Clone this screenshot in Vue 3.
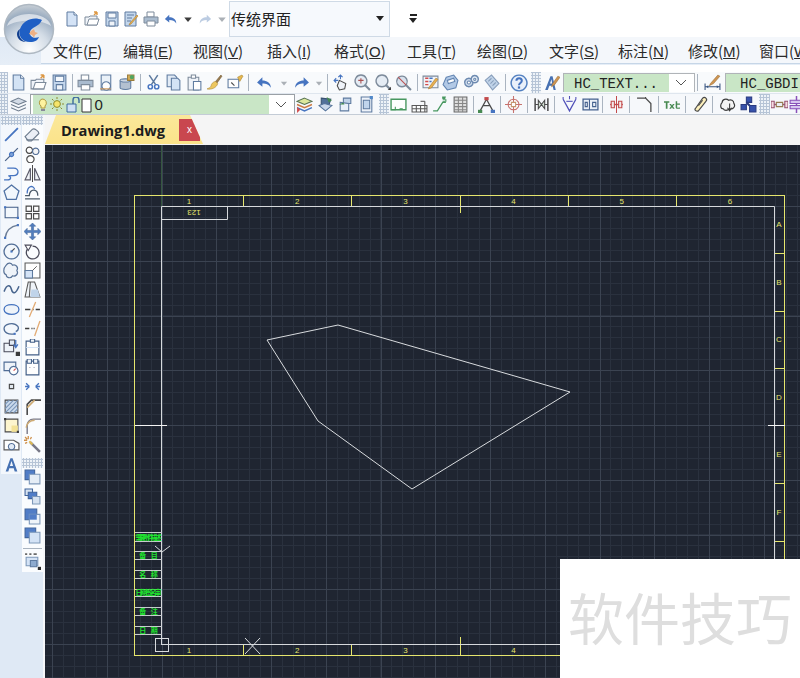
<template>
  <div class="cad-app">
    <!-- application orb sits over title + menu bars -->
    <svg class="orb" viewBox="0 0 52 52" width="52" height="52">
      <defs>
        <radialGradient id="orbFill" cx="50%" cy="92%" r="90%">
          <stop offset="0" stop-color="#ffffff" />
          <stop offset="0.45" stop-color="#d3dce6" />
          <stop offset="0.8" stop-color="#9aacc0" />
          <stop offset="1" stop-color="#c4ccd4" />
        </radialGradient>
      </defs>
      <circle cx="26" cy="26" r="24.5" fill="url(#orbFill)" stroke="#aeb8c2" stroke-width="1.5" />
      <path d="M4 23C8 7 44 7 48 23 38 16 14 16 4 23z" fill="#eef1f5" opacity=".7" />
      <path d="M39 17C31 13 20 17 17 26c-2 7 2 13 10 13 5 0 8-2 9-5-4 2-10 0-9-5 1-5 9-5 12-12z" fill="#1f5fc4" />
      <path d="M17 26c-2 6 0 11 6 13-6 0-9-4-9-8 0-2 1-4 3-5z" fill="#123f8e" />
      <path d="M28 28l3-2 1 3 3 1-3 2-1 3-2-3-3-1z" fill="#eeb084" />
    </svg>

    <!-- title bar -->
    <div class="title-bar">
      <span v-for="(ic, i) in quickIcons" :key="i" class="btn" :style="{ width: ic.w + 'px' }">
        <svg viewBox="0 0 16 16" :width="ic.s" :height="ic.s">
          <path v-for="(s, j) in icons[ic.n]" :key="j" :d="s[0]" :fill="s[1] || 'none'" :stroke="s[2] || 'none'" :stroke-width="s[3] || 1" />
        </svg>
      </span>
      <div class="ws-combo">
        <span>传统界面</span>
        <i class="caret"></i>
      </div>
      <span class="more"><b></b><i class="caret"></i></span>
    </div>

    <!-- menu bar -->
    <div class="menu-bar">
      <nav class="menu-items">
        <span v-for="m in menus" :key="m.k" class="menu-item" :style="{ width: m.w + 'px' }">{{ m.t }}(<u>{{ m.k }}</u>)</span>
      </nav>
    </div>

    <!-- toolbars -->
    <div class="toolbar tb1">
      <template v-for="(it, i) in toolbar1" :key="i">
        <span v-if="it.n === 'handle'" class="handle" :style="{ width: (it.w || 8) + 'px', marginLeft: (it.ml || 0) + 'px' }"></span>
        <span v-else-if="it.n === 'sep'" class="sep"></span>
        <div v-else-if="it.combo" class="combo" :style="{ width: it.w + 'px' }">
          <span class="combo-text">{{ it.combo }}</span>
          <span v-if="it.chev" class="chev"><svg viewBox="0 0 12 8" width="12" height="8"><path d="M1 1l5 5 5-5" fill="none" stroke="#555" /></svg></span>
        </div>
        <span v-else class="btn" :style="{ width: (it.w || 20.5) + 'px' }">
          <svg viewBox="0 0 16 16" :width="it.s || 17" :height="it.s || 17">
            <path v-for="(s, j) in icons[it.n]" :key="j" :d="s[0]" :fill="s[1] || 'none'" :stroke="s[2] || 'none'" :stroke-width="s[3] || 1" />
          </svg>
        </span>
      </template>
    </div>

    <div class="toolbar tb2">
      <template v-for="(it, i) in toolbar2" :key="i">
        <span v-if="it.n === 'handle'" class="handle" :style="{ width: (it.w || 8) + 'px', marginLeft: (it.ml || 0) + 'px' }"></span>
        <span v-else-if="it.n === 'sep'" class="sep"></span>
        <div v-else-if="it.n === 'layer'" class="layer-combo">
          <div class="layer-fill">
            <svg viewBox="0 0 56 16" width="56" height="16">
              <path d="M5 2a4 4 0 0 1 3 7v2H4V9a4 4 0 0 1 1-7z" fill="#fdf3a0" stroke="#b09a40" />
              <path d="M4 12h4v2H4z" fill="#889" />
              <circle cx="20" cy="7" r="3.4" fill="#f6e46a" stroke="#8d8a30" />
              <path d="M20 0v2M20 12v2M13 7h2M25 7h2M15 2l1.5 1.5M25 2l-1.5 1.5M15 12l1.5-1.5M25 12l-1.5-1.5" stroke="#8d8a30" />
              <path d="M30 7h9v8h-9z" fill="#cfe0f5" stroke="#3d6a9e" />
              <path d="M36 7V3a3 3 0 0 1 6 0v3" fill="none" stroke="#3d6a9e" stroke-width="1.4" />
              <path d="M45 2h9v13h-9z" fill="#fff" stroke="#333" />
            </svg>
            <span>0</span>
          </div>
          <span class="chev"><svg viewBox="0 0 12 8" width="12" height="8"><path d="M1 1l5 5 5-5" fill="none" stroke="#555" /></svg></span>
        </div>
        <span v-else class="btn" :style="{ width: (it.w || 20.5) + 'px' }">
          <svg viewBox="0 0 16 16" width="17" height="17">
            <path v-for="(s, j) in icons[it.n]" :key="j" :d="s[0]" :fill="s[1] || 'none'" :stroke="s[2] || 'none'" :stroke-width="s[3] || 1" />
          </svg>
        </span>
      </template>
    </div>

    <!-- main area: side toolbars + drawing -->
    <div class="main">
      <aside class="side">
        <div class="side-col col-a">
          <span class="side-handle"></span>
          <span v-for="n in sideA" :key="n" class="side-btn">
            <svg viewBox="0 0 16 16" width="17" height="17">
              <path v-for="(s, j) in icons[n]" :key="j" :d="s[0]" :fill="s[1] || 'none'" :stroke="s[2] || 'none'" :stroke-width="s[3] || 1" />
            </svg>
          </span>
        </div>
        <div class="side-col col-b">
          <span class="side-handle"></span>
          <span v-for="n in sideB" :key="n" class="side-btn">
            <svg viewBox="0 0 16 16" width="17" height="17">
              <path v-for="(s, j) in icons[n]" :key="j" :d="s[0]" :fill="s[1] || 'none'" :stroke="s[2] || 'none'" :stroke-width="s[3] || 1" />
            </svg>
          </span>
          <span class="side-handle mid"></span>
          <span v-for="n in sideB2" :key="n" class="side-btn">
            <svg viewBox="0 0 16 16" width="17" height="17">
              <path v-for="(s, j) in icons[n]" :key="j" :d="s[0]" :fill="s[1] || 'none'" :stroke="s[2] || 'none'" :stroke-width="s[3] || 1" />
            </svg>
          </span>
          <span class="side-sep"></span>
          <span class="side-btn">
            <svg viewBox="0 0 16 16" width="17" height="17">
              <path v-for="(s, j) in icons.spell" :key="j" :d="s[0]" :fill="s[1] || 'none'" :stroke="s[2] || 'none'" :stroke-width="s[3] || 1" />
            </svg>
          </span>
        </div>
      </aside>

      <section class="doc">
        <div class="tab-strip">
          <div class="tab">
            <span class="tab-name">Drawing1.dwg</span>
            <span class="tab-close">x</span>
          </div>
        </div>

        <div class="canvas-wrap">
          <svg class="canvas" viewBox="45 145 755 533" width="755" height="533">
            <rect x="45" y="145" width="755" height="533" fill="#1f2531" />
            <!-- grid -->
            <path :d="minorGrid" stroke="#2a313e" fill="none" />
            <path :d="majorGrid" stroke="#3b4351" fill="none" />
            <path d="M161.5 145V206" stroke="#35573f" />

            <!-- yellow sheet border -->
            <g stroke="#e6e66e" fill="none">
              <rect x="134.5" y="195.5" width="650" height="460" />
              <path d="M243.5 195V206M351.5 195V206M460.5 195V213M568.5 195V206M676.5 195V206" />
              <path d="M243.5 644V655M351.5 644V655M460.5 637V655" />
              <path d="M774 253.5H785M774 311.5H785M774 368.5H785M774 483.5H785M774 541.5H785" />
            </g>
            <g class="sheet-label">
              <text v-for="l in topLabels" :key="l.t" :x="l.x" y="204">{{ l.t }}</text>
              <text v-for="l in bottomLabels" :key="'b' + l.t" :x="l.x" y="653">{{ l.t }}</text>
              <text v-for="l in sideLabels" :key="l.t" x="779" :y="l.y">{{ l.t }}</text>
            </g>

            <!-- white inner border -->
            <g stroke="#d6d9dc" fill="none">
              <path d="M161.5 645V206.5H774.5V600" />
              <path d="M161.5 644.5H600" />
              <path d="M162 219.5H227.5V206" />
              <path d="M135 425.5H167M768 425.5H785" stroke="#f4f4f4" />
            </g>
            <text class="sheet-label" transform="rotate(180 194 213)" x="194" y="216">123</text>

            <!-- title block rows -->
            <g stroke="#c8cbcf" fill="none">
              <path v-for="r in titleRows" :key="r.y1" :d="`M135 ${r.y1}.5H162M135 ${r.y2}.5H162`" />
            </g>
            <g class="row-label">
              <text v-for="r in titleRows" :key="r.t" x="148.5" :y="r.y2 - 1.5" :textLength="r.len || null">{{ r.t }}</text>
            </g>

            <!-- drawn shape -->
            <polygon points="267,340 338,325 570,392 412,489 318,421" fill="none" stroke="#d8dbde" />

            <!-- ucs and cursor -->
            <g stroke="#d8dbde" fill="none">
              <rect x="155.5" y="638.5" width="13" height="13" />
              <path d="M155 546l7 6 8-6" />
              <path d="M245 638l15 16M260 638l-15 16" />
            </g>
          </svg>
          <!-- watermark over the drawing -->
          <div class="watermark">软件技巧</div>
        </div>
      </section>
    </div>
  </div>
</template>

<script setup>
const B = '#2e62b8'
const O = '#4a6a94'
const L = '#cfe0f5'
const G = '#6d7c8e'

// each icon: list of [path, fill, stroke, width]
const icons = {
  new: [['M3 1h7l3 3v11H3z', L, O], ['M10 1v3h3', '#fff', O]],
  open: [['M1 6h4l1-1h7v9H1z', '#eef3f9', G], ['M3 14l2-6h10l-2 6z', '#fff', G], ['M10 4l3-3M13 1v3M13 1h-3', null, '#d98a2a', 1.4]],
  save: [['M2 1h12v14H2z', '#bcd2ea', O], ['M4 2h8v5H4z', '#f4f8fc', O], ['M5 10h6v5H5z', '#eef3f9', O]],
  savepen: [['M2 1h11v14H2z', '#bcd2ea', O], ['M4 4h7M4 7h5M4 10h4', null, O], ['M7 12l7-8 1 1-7 8-2 1z', '#e6a83a', '#a06a18', 0.6]],
  print: [['M4 1h7v5H4z', '#fff', G], ['M1 6h14v6H1z', '#9fb3c9', G], ['M4 10h8v5H4z', '#fff', G]],
  preview: [['M3 1h9v14H3z', '#e9f0f8', O], ['M11 9a4 4 0 1 1-1-1z', '#fff', O], ['M2 14h10', null, '#c9873b']],
  publish: [['M2 6c0-2 10-2 10 0v7c0 2-10 2-10 0z', '#aab9ca', O], ['M2 6c0 2 10 2 10 0', '#e8eef5', O], ['M9 1h6v5H9z', '#d9a441', '#8d6a20'], ['M13 5a2 2 0 1 1 .1 0', '#3a9a4a']],
  cut: [['M4 1l6 9M12 1l-6 9', null, O, 1.4], ['M3 12a2 2 0 1 0 4 0 2 2 0 1 0-4 0zM9 12a2 2 0 1 0 4 0 2 2 0 1 0-4 0z', '#fff', B, 1.4]],
  copy: [['M2 1h7l2 2v9H2z', '#dfe9f5', O], ['M6 4h6l2 2v9H6z', L, O]],
  paste: [['M2 3h10v12H2z', '#eef3f9', G], ['M5 1h4v3H5z', '#fff', G], ['M7 7h7v8H7z', '#fff', O]],
  brush: [['M9 7l5-6 1 1-5 7z', '#8a6a3a', '#6a4a1a', 0.6], ['M9 7l2 2c-1 4-6 6-10 5 3-1 4-2 4-4 1-2 3-3 4-3z', '#ecc14a', '#a8801e', 0.6]],
  match: [['M1 5h10v8H1z', '#fff', O], ['M4 8l3 3', null, '#333'], ['M10 3l4-2 1 1-3 5z', '#e6b13a', '#a07818', 0.6]],
  undo: [['M1 8l5-5v3c4 0 8 2 8 7-2-3-4-4-8-4v3z', B]],
  undoL: [['M1 8l5-5v3c4 0 8 2 8 7-2-3-4-4-8-4v3z', '#9db8da']],
  redo: [['M15 8l-5-5v3c-4 0-8 2-8 7 2-3 4-4 8-4v3z', B]],
  redoL: [['M15 8l-5-5v3c-4 0-8 2-8 7 2-3 4-4 8-4v3z', '#b3c6df']],
  dd: [['M3 6h10l-5 6z', '#222']],
  ddL: [['M3 6h10l-5 6z', '#a0a6ad']],
  pan: [['M6 6l6 3-1 5-5 1-2-4z', '#eef3f9', '#333'], ['M1 6h4M3 4l-2 2 2 2M7 1v4M5 3l2-2 2 2', null, B]],
  zoomR: [['M6.5 1a5.5 5.5 0 1 0 .1 0z', '#e3ebf4', G, 1.3], ['M4 6h5M6.5 4v5', null, '#a03a3a'], ['M10.5 10.5L15 15', null, G, 2]],
  zoomW: [['M6.5 1a5.5 5.5 0 1 0 .1 0z', '#e3ebf4', G, 1.3], ['M10.5 10.5L14 14', null, G, 2], ['M12 15h3v-3z', '#222']],
  zoomP: [['M6.5 2a5 5 0 1 0 .1 0z', '#d4dfec', G, 1.3], ['M3 3l8 8', null, '#b23a3a'], ['M10.5 10.5L15 15', null, G, 2]],
  props: [['M1 2h14v11H1z', '#f0f4f9', G], ['M3 4h3M3 7h3M3 10h3', null, '#c33', 1.4], ['M7 4h3M7 7h2', null, B, 1.4], ['M7 12l6-8 2 1-6 8-3 1z', '#e6a83a', '#a06a18', 0.6]],
  sheet: [['M4 3l7-2 4 5-2 7-8 2-4-5z', '#a9c3e3', '#4e75a8'], ['M5 6l6-2 1 3-6 2z', '#fff', '#4e75a8']],
  gear2: [['M5.5 4a4 4 0 1 0 .1 0z', '#c8d8ec', '#5a7ba6', 1.4], ['M11 1.5a3.4 3.4 0 1 0 .1 0z', '#e3ecf6', '#5a7ba6', 1.4], ['M5.5 6.5a1.5 1.5 0 1 0 .1 0zM11 4a1 1 0 1 0 .1 0z', '#fff', '#5a7ba6']],
  calc: [['M2 6l6-5 7 8-6 6z', '#b9cee6', '#7a93b3'], ['M5 7l3-3M7 9l3-3M9 11l3-3', null, '#7a93b3']],
  help: [['M8 1a7 7 0 1 0 .1 0z', '#e7effa', '#3b6fb8', 1.3], ['M5.7 6c0-3 4.8-3 4.8 0 0 2-2.5 2-2.5 4', null, B, 1.8], ['M7 11h2v2H7z', B]],
  textstyle: [['M2 15L7 2h2l3 13h-2l-1-4H6l-1.5 4zM6.6 9h2L8 5z', '#2f5fa8'], ['M9 9l5-7 2 1-5 7-3 2z', '#c9873b', '#8a5a1a', 0.5]],
  dimstyle: [['M1 12h14M1 9v6M15 9v6', null, '#1f3f70'], ['M2 12l2-1.5v3zM14 12l-2-1.5v3z', '#1f3f70'], ['M6 9l7-8 2 1-6 7-4 2z', '#c9873b', '#8a5a1a', 0.5]],
  layers: [['M8 2l7 3-7 3-7-3z', '#cfd8e4', '#5d6d80'], ['M1 8l7 3 7-3M1 11l7 3 7-3', null, '#5d6d80']],
  l1: [['M8 2l7 3-7 3-7-3z', '#d9e58f', '#3f5e3a'], ['M1 8l7 3 7-3', null, '#c66a2a', 1.3], ['M1 11l7 3 7-3', null, '#2e62b8', 1.3], ['M1 10l3 3-3 3z', '#c33']],
  l2: [['M4 2l9 1-2 6-7-1z', '#3c5f8c', '#213c60'], ['M2 9l5-2 7 2-6 5z', '#c3d3e8', '#3c5f8c'], ['M9 1l5 3-3 2z', '#2e7a3a']],
  l3: [['M6 2h7v5H6z', '#b9cde6', O], ['M3 6l8 1v7H3z', '#e8f0f9', O], ['M2 8l4-2 1 2z', '#2a7a3a']],
  l4: [['M3 1h10v14H3z', '#eef3fa', O], ['M5 4h6v8H5z', '#b9d0ea', O], ['M11 0h3v3h-3z', '#3a79c3']],
  blockG: [['M1 3h14v10H1z', '#fff', '#2f8a4a', 1.3], ['M1 13h4v-3', null, '#2f8a4a'], ['M9 12h3', null, '#2f8a4a']],
  chartD: [['M1 9h14v6H1z', '#fff', '#444'], ['M1 12h14M5 9v6M9 9v6M13 5v10', null, '#444'], ['M9 5h4', null, '#444']],
  leader: [['M2 14h4l5-8h3', null, '#2f8a4a', 1.2], ['M14 1h-3v1h2v1h-2M14 3v2h-3', null, '#2f8a4a']],
  table: [['M2 1h12v14H2z', '#dcdcdc', '#555'], ['M2 4h12M2 7h12M2 10h12M2 13h12M6 1v14M10 1v14', null, '#777']],
  tree: [['M8 3l6 11M8 3L2 14M5 9h6', null, '#333', 1.2], ['M6 1h4v3H6z', '#b33'], ['M0 13h4v3H0z', '#2e7a3a'], ['M12 13h4v3h-4z', '#2e62b8']],
  target: [['M8 3a5 5 0 1 0 .1 0z', '#fff', '#c0605a'], ['M8 0v6M8 10v6M0 8h6M10 8h6', null, '#c0605a'], ['M6 6h4v4H6z', 'none', '#c08a5a']],
  dimW: [['M2 2v12M14 2v12', null, '#333', 1.4], ['M2 8h12', null, '#333'], ['M5 4l3 4-3 4zM11 4L8 8l3 4z', '#cfe0d0', '#333']],
  funnel: [['M2 3l6 11 6-11', null, '#3a3ab0', 1.2], ['M5 5h6', null, '#3a3ab0'], ['M2 1v2M8 0v3M14 1v2', null, '#3a3ab0']],
  frame01: [['M1 3h14v10H1z', '#eaf0f8', '#2d4c80', 1.2], ['M7 3v10', null, '#2d4c80'], ['M3 6h2v4H3zM10 6h3v4h-3z', 'none', '#2d4c80']],
  centerR: [['M2 8h12', null, '#b33', 1.3], ['M8 0v16', null, '#b33'], ['M3 5h3v6H3zM10 5h3v6h-3z', '#f4e8e8', '#b33']],
  corner: [['M1 2h8l5 5v8', null, '#333', 1.2], ['M9 2v-1', null, '#333']],
  txtG: [['M0 5h5v1.300H3.300V12H1.700V6.300H0zM5 7.500h1.600l.9 1.400.9-1.400H10L8.400 9.700 10 12H8.400l-.9-1.400-.9 1.400H5l1.600-2.300zM11 5h1.400v2H15v1.200h-2.600V10.500c0 .6.800.5 2.600.4V12c-3 .3-4 0-4-1.500z', '#2f7a3a']],
  clip: [['M4 12L11 2c2-2 5 1 3 3L7 14c-2 1-4-1-3-2z', '#fff0b5', '#333', 1.1], ['M7 9l4-5', null, '#333']],
  cloudDown: [['M3 6c0-3 4-4 6-2 2-1 5 0 5 3 2 3-1 6-4 5-2 2-5 2-6 0-3 0-3-4-1-6z', '#f4f4f4', '#222', 1.1], ['M10 7v6M8 11l2 3 2-3', null, '#222']],
  blue: [['M6 1h5v5H6zM1 8h5v5H1zM9 9h6v6H9z', '#1c3aa0', '#0e2270'], ['M6 6l3 3', null, '#0e2270', 2]],
  dimBar: [['M0 5h3v6H0zM13 5h3v6h-3z', '#f6d9e0', '#8a3a5a'], ['M3 8h10', null, '#8a3a5a', 1.4], ['M5 6h6v4H5z', '#e9eef5', '#8a6a3a']],
  purple: [['M8 0v16', null, '#7a3ab0', 1.4], ['M2 4h12v3H2zM2 9h12v3H2z', '#d3c0ee', '#7a3ab0']],
  // left column A
  line: [['M2 14L14 2', null, B, 1.7]],
  xline: [['M2 14L14 2', null, '#34507a', 1.2], ['M8 6a2 2 0 1 0 .1 0z', '#6f97d2', B]],
  pline: [['M1 14h3c4 0 4-3 1-4', null, B, 1.2], ['M4 3h6c6 0 5 7 0 7H6', null, B, 1.2]],
  polygon: [['M8 1l7 5.5-2.6 8H3.6L1 6.5z', '#f2f7fc', '#3a6098', 1.2]],
  rect: [['M2 3h12v10H2z', '#f2f7fc', '#2a4a78', 1], ['M1 2h2v2H1zM13 12h2v2h-2z', B]],
  arc: [['M2 14C3 7 8 3 14 2', null, '#5a6d88', 1.4], ['M1 13h2v2H1zM13 1h2v2h-2z', B]],
  circle: [['M8 1a7 7 0 1 0 .1 0z', '#f2f7fc', '#3a5a88', 1.2], ['M8 8l3-3', null, '#333'], ['M7 7h2v2H7z', B]],
  cloud: [['M3 3c2-3 5-2 6 0 3-1 6 2 4 5 2 3-1 6-4 5-2 3-6 2-6-1-3-1-3-6 0-9z', '#eef3f9', '#43608a', 1.1]],
  spline: [['M1 10c3-8 6-6 7-2s4 5 7-3', null, '#30507e', 1.4]],
  ellipse: [['M1 8c0-6 14-6 14 0s-14 6-14 0z', '#eef3f9', B, 1.2]],
  earc: [['M11 13c-6 1-10-1-10-5s9-7 13-2c1 2 0 4-2 5', null, '#3a5a88', 1.2], ['M10 12h2v2h-2z', B]],
  insert: [['M1 4h9v8H1z', '#eef3f9', '#334', 1], ['M6 1h5v5H6z', '#dfe9f5', '#334'], ['M12 1v7M10 5l2 3 2-3', null, B, 1.2], ['M12 12h4v4h-4z', '#222']],
  block: [['M1 3h11v8H1z', '#eef3f9', '#3a5a88', 1.1], ['M10 7a4 4 0 1 0 .1 0z', '#fff', '#3a5a88', 1.1], ['M10 11l2-2', null, '#c33']],
  point: [['M6 6h4v4H6z', '#dfe6ee', '#333', 1.1]],
  hatch: [['M2 2h12v12H2z', '#c5d6ea', '#333', 1], ['M2 6l4-4M2 10l8-8M2 14L14 2M6 14l8-8M10 14l4-4', null, '#6a88b0']],
  grad: [['M2 2h12v12H2z', '#fff5c8', '#333', 1], ['M8 8h6v6H8z', '#f4e08a'], ['M1 1h2v2H1zM13 13h2v2h-2z', '#222']],
  region: [['M1 4h9l5 3v6H1z', '#fff', '#444', 1.1], ['M8 7a3 3 0 1 0 .1 0z', '#dfe9f5', '#3a5a88']],
  textA: [['M2.500 14.500L7 2h2l4.500 12.500h-2.500l-.9-3H5.900l-.9 3zM6.500 9.500h3L8 4.800z', '#2f5fa8']],
  // left column B
  erase: [['M1 10l7-7c2-1 6 2 6 4l-7 7H4z', '#e9eef5', '#5a6a7e', 1.1], ['M2 13h12', null, '#5a6a7e']],
  copy2: [['M5 1a3 3 0 1 0 .1 0z', '#fff', '#333', 1.1], ['M11 2a3 3 0 1 0 .1 0z', '#f4f4f4', '#3a5a88', 1.1], ['M6 9a3.400 3.400 0 1 0 .1 0z', '#fff', '#333', 1.1]],
  mirror: [['M8 0v16', null, '#333'], ['M6 3v11H1zM10 3v11h5z', '#f0f4f9', '#445', 1.1]],
  offset: [['M1 14h14M1 11h4c0-7 8-7 8 0', null, '#345', 1.2], ['M3 9c0-8 6-8 7-4', null, B, 1.2]],
  array: [['M2 2h5v5H2zM9 2h5v5H9zM2 9h5v5H2zM9 9h5v5H9z', '#fff', '#333', 1.1]],
  move: [['M8 0l3 3H9v4h4V5l3 3-3 3V9H9v4h2l-3 3-3-3h2V9H3v2L0 8l3-3v2h4V3H5z', '#3a6cb5', '#234d8a', 0.5]],
  rotate: [['M8 3a6 6 0 1 1-5 3', null, '#334', 1.2], ['M1 2l6 0-3 5z', '#fff', '#334']],
  scale: [['M1 1h14v14H1z', '#fff', '#444', 1], ['M1 8h7v7H1z', '#cfe0f5', O], ['M8 8l4-4', null, '#333', 0.8]],
  stretch: [['M4 1h6l5 14H1z', '#eef3f9', '#444', 1], ['M6 1L5 15', null, '#444'], ['M7 8h6l2 7H6z', '#b9cfe8']],
  trim: [['M1 8h5M8 8h1M11 8h4', null, '#222', 1.4], ['M11 1L5 15', null, '#e0a060', 1.2]],
  extend: [['M1 8h4M7 8h1M9 8h1', null, '#222', 1.4], ['M15 1L10 15', null, '#e0a060', 1.2]],
  breakp: [['M2 2h12v13H2z', '#fff', '#2b4a78', 1.1], ['M6 0h4v3H6z', '#eef3f9', '#2b4a78'], ['M2 8h12', null, '#cfe0f5']],
  breakt: [['M2 2h12v13H2z', '#fff', '#2b4a78', 1.1], ['M3 0h4v4H3zM9 0h4v4H9z', '#eef3f9', '#2b4a78'], ['M5 8h1M9 8h1', null, '#99a']],
  join: [['M1 8h4M15 8h-4', null, B, 1.2], ['M5 8L2 5M5 8l-3 3M11 8l3-3M11 8l3 3', null, B, 1.2]],
  chamfer: [['M3 16V6L7 2h9', null, '#333', 1.5], ['M3 9l7-7', null, '#c9a060', 1.5]],
  fillet: [['M3 16V8c0-3 2-6 6-6h7', null, '#667', 1.3], ['M2 10C3 5 6 3 10 3', null, '#c9a060', 1.3]],
  explode: [['M6 6l9 9', null, '#667', 2.4], ['M5 5l3 3', null, '#d9b040', 2], ['M4 0v3M0 4h3M1 1l2 2M7 1L6 3M1 7l2-1', null, '#c98030', 1.2]],
  ord1: [['M1 1h9v9H1z', '#3a6cc0', '#27508f'], ['M5 5h10v9H5z', '#e3ecf6', '#6d8bb0']],
  ord2: [['M1 1h7v6H1z', '#d3e0f0', '#27508f'], ['M4 4h8v6H4z', '#3a6cc0', '#27508f'], ['M8 8h7v7H8z', '#d3e0f0', '#6d8bb0']],
  ord3: [['M1 1h11v10H1z', '#3a6cc0', '#27508f'], ['M5 6h10v9H5z', '#eef3f9', '#6d8bb0'], ['M5 6h7v5H5z', '#3a6cc0']],
  ord4: [['M1 1h10v9H1z', '#3a6cc0', '#27508f'], ['M5 5h10v10H5z', '#cfe0f5', '#6d8bb0']],
  spell: [['M2 4h11v8H2z', '#cfe0f5', '#6d8bb0'], ['M6 7h6v6H6z', '#7f9fc8', '#4a6a94'], ['M13 13h3v3h-3z', '#111'], ['M1 1h2M5 1h2M9 1h3', null, '#555', 1.6]]
}

const quickIcons = [
  { n: 'new', w: 20, s: 16 }, { n: 'open', w: 20, s: 16 }, { n: 'save', w: 19, s: 16 }, { n: 'savepen', w: 20, s: 16 },
  { n: 'print', w: 19, s: 16 }, { n: 'undo', w: 21, s: 14 }, { n: 'dd', w: 13, s: 12 }, { n: 'redoL', w: 21, s: 14 }, { n: 'ddL', w: 13, s: 12 }
]

const menus = [
  { t: '文件', k: 'F', w: 70 }, { t: '编辑', k: 'E', w: 70 }, { t: '视图', k: 'V', w: 74 }, { t: '插入', k: 'I', w: 67 },
  { t: '格式', k: 'O', w: 73 }, { t: '工具', k: 'T', w: 70 }, { t: '绘图', k: 'D', w: 72 }, { t: '文字', k: 'S', w: 69 },
  { t: '标注', k: 'N', w: 70 }, { t: '修改', k: 'M', w: 71 }, { t: '窗口', k: 'W', w: 60 }
]

const toolbar1 = [
  { n: 'handle' }, { n: 'new' }, { n: 'open' }, { n: 'save' }, { n: 'sep' },
  { n: 'print' }, { n: 'preview' }, { n: 'publish' }, { n: 'sep' },
  { n: 'cut' }, { n: 'copy' }, { n: 'paste' }, { n: 'brush' }, { n: 'match' }, { n: 'sep' },
  { n: 'undo', w: 26 }, { n: 'ddL', w: 12, s: 10 }, { n: 'redo', w: 23 }, { n: 'ddL', w: 12, s: 10 }, { n: 'sep' },
  { n: 'pan', w: 22 }, { n: 'zoomR' }, { n: 'zoomW' }, { n: 'zoomP' }, { n: 'sep' },
  { n: 'props' }, { n: 'sheet' }, { n: 'gear2' }, { n: 'calc' }, { n: 'sep' },
  { n: 'help', w: 21, s: 18 }, { n: 'handle', w: 10, ml: 1.5 },
  { n: 'textstyle', w: 22 }, { combo: 'HC_TEXT...', w: 132, chev: true }, { n: 'sep' },
  { n: 'dimstyle', w: 24 }, { combo: 'HC_GBDI', w: 90 }
]

const toolbar2 = [
  { n: 'handle' }, { n: 'layers' }, { n: 'layer' },
  { n: 'l1' }, { n: 'l2' }, { n: 'l3' }, { n: 'l4' }, { n: 'handle', w: 10, ml: 2 },
  { n: 'blockG', w: 20 }, { n: 'chartD', w: 21 }, { n: 'leader' }, { n: 'table', w: 20 }, { n: 'sep' },
  { n: 'tree', w: 21 }, { n: 'sep' }, { n: 'target', w: 21.5 }, { n: 'sep' }, { n: 'dimW', w: 21 }, { n: 'sep' },
  { n: 'funnel', w: 23 }, { n: 'frame01', w: 19 }, { n: 'sep' }, { n: 'centerR', w: 21 }, { n: 'sep' },
  { n: 'corner', w: 23 }, { n: 'sep' }, { n: 'txtG', w: 21 }, { n: 'sep' }, { n: 'clip', w: 21 }, { n: 'sep' },
  { n: 'cloudDown', w: 23 }, { n: 'blue', w: 20 }, { n: 'handle', w: 11 }, { n: 'dimBar', w: 20 }, { n: 'purple', w: 14 }
]

const sideA = ['line', 'xline', 'pline', 'polygon', 'rect', 'arc', 'circle', 'cloud', 'spline', 'ellipse', 'earc', 'insert', 'block', 'point', 'hatch', 'grad', 'region', 'textA']
const sideB = ['erase', 'copy2', 'mirror', 'offset', 'array', 'move', 'rotate', 'scale', 'stretch', 'trim', 'extend', 'breakp', 'breakt', 'join', 'chamfer', 'fillet', 'explode']
const sideB2 = ['ord1', 'ord2', 'ord3', 'ord4']

// grid: majors every 54.75px, minors every fifth of that
const STEP = 54.75
const X0 = 45
const X1 = 800
const Y0 = 145
const Y1 = 678
function gridPath(step, ox, oy) {
  let d = ''
  for (let x = ox - step * Math.ceil((ox - X0) / step); x < X1; x += step) {
    d += `M${Math.round(x) + 0.5} ${Y0}V${Y1}`
  }
  for (let y = oy - step * Math.ceil((oy - Y0) / step); y < Y1; y += step) {
    d += `M${X0} ${Math.round(y) + 0.5}H${X1}`
  }
  return d
}
const minorGrid = gridPath(STEP / 5, 161.5, 206)
const majorGrid = gridPath(STEP, 161.5, 206)

const topLabels = [1, 2, 3, 4, 5, 6].map((t, i) => ({ t, x: 189 + i * 108.2 }))
const bottomLabels = [1, 2, 3, 4].map((t, i) => ({ t, x: 189 + i * 108.2 }))
const sideLabels = ['A', 'B', 'C', 'D', 'E', 'F'].map((t, i) => ({ t, y: 227 + i * 57.6 }))

const titleRows = [
  { y1: 532, y2: 541, t: '需要附件描述', len: 26 },
  { y1: 551, y2: 559, t: '备 目' },
  { y1: 570, y2: 578, t: '名 称' },
  { y1: 589, y2: 596, t: '日期签名审', len: 26 },
  { y1: 607, y2: 615, t: '备 注' },
  { y1: 626, y2: 634, t: '日 期' }
]
</script>

<style>
html, body {
  margin: 0;
  background: #fff;
  overflow: hidden;
}
</style>

<style scoped>
.cad-app {
  position: relative;
  width: 800px;
  height: 678px;
  overflow: hidden;
  background: #fff;
  font-family: "Noto Sans CJK SC", "Liberation Sans", sans-serif;
  color: #222;
}
.orb {
  position: absolute;
  left: 3px;
  top: 3px;
  z-index: 5;
}
.btn {
  display: inline-flex;
  flex: none;
  align-items: center;
  justify-content: center;
}
.btn svg,
.side-btn svg {
  flex: none;
  opacity: 0.88;
}
/* title */
.title-bar {
  display: flex;
  align-items: center;
  height: 37px;
  padding-left: 62px;
  background: #fff;
}
.ws-combo {
  display: flex;
  flex: none;
  align-items: center;
  justify-content: space-between;
  box-sizing: border-box;
  width: 161px;
  height: 36px;
  padding: 0 5px 0 1px;
  margin-left: 1px;
  background: #f6f9fd;
  border: 1px solid #cfdae6;
  font-size: 15px;
}
.caret {
  display: block;
  width: 0;
  height: 0;
  border: 4px solid transparent;
  border-top: 5px solid #222;
  border-bottom: 0;
}
.more {
  display: flex;
  flex-direction: column;
  gap: 2px;
  align-items: center;
  margin-left: 19px;
}
.more b {
  width: 7px;
  height: 2px;
  background: #222;
}
/* menu */
.menu-bar {
  height: 28px;
  padding-left: 41px;
  background: linear-gradient(#dfe9f5, #e6eef7);
}
.menu-items {
  display: flex;
  box-sizing: border-box;
  height: 27px;
  padding-left: 12px;
  align-items: center;
  background: #f4f7fb;
  border-bottom: 1px solid #c6d6e7;
  font-size: 15px;
  white-space: nowrap;
  overflow: hidden;
  color: #2a2a2a;
}
.menu-item {
  flex: none;
}
.menu-items u {
  font-family: "Liberation Sans", sans-serif;
}
/* toolbars */
.toolbar {
  display: flex;
  align-items: center;
  height: 21px;
  white-space: nowrap;
  overflow: hidden;
  background: #f6f8fb;
}
.tb1 {
  margin-top: 7px;
  background: #f8fafc;
}
.tb2 {
  height: 22px;
  border-top: 1px solid #dfe6ee;
  border-bottom: 1px solid #c4ccd6;
  box-sizing: border-box;
}
.handle {
  flex: none;
  align-self: stretch;
  background:
    radial-gradient(circle at 1px 1px, #eef3f8 0.8px, transparent 1px) 2px 1px / 3px 3px,
    #b6c4d6;
}
.sep {
  flex: none;
  width: 1px;
  height: 17px;
  margin: 0 2.5px;
  background: #aab4c0;
}
.combo {
  display: flex;
  flex: none;
  align-items: center;
  box-sizing: border-box;
  height: 19px;
  border: 1px solid #b0b4b8;
  border-bottom: 0;
  background: #fff;
  font-family: "Liberation Mono", monospace;
  font-size: 14px;
}
.combo-text {
  flex: 1;
  align-self: stretch;
  padding-top: 1px;
  line-height: 18px;
  text-align: center;
  background: #c9e6c6;
  color: #222;
}
.chev {
  display: flex;
  flex: none;
  align-items: center;
  justify-content: center;
  width: 25px;
}
.layer-combo {
  display: flex;
  flex: none;
  align-items: center;
  box-sizing: border-box;
  width: 265px;
  height: 20px;
  margin: 0 0 0 1px;
  background: #fff;
  border: 1px solid #9aa0a6;
  border-bottom: 0;
}
.layer-fill {
  display: flex;
  flex: 1;
  align-self: stretch;
  align-items: center;
  gap: 2px;
  margin-left: 2px;
  padding-left: 4px;
  background: #c9e6c6;
  font: 15px "Liberation Sans", sans-serif;
}
/* main */
.main {
  display: flex;
  height: 563px;
}
.side {
  display: flex;
  flex: none;
  align-items: flex-start;
  gap: 1px;
  box-sizing: border-box;
  width: 45px;
  height: 100%;
  padding: 1px 2px 0 1px;
  background: linear-gradient(to right, #dfe9f5 43px, #f5f7fa 43px);
}
.side-col {
  display: flex;
  flex-direction: column;
  width: 20px;
  background: #f3f7fc;
}
.col-b {
  width: 21px;
  background: #fafcfe;
}
.side-handle {
  flex: none;
  height: 9px;
  background:
    radial-gradient(circle at 1px 1px, #eef3f8 0.8px, transparent 1px) 2px 2px / 3px 3px,
    #b6c4d6;
}
.side-handle.mid {
  margin: 3px 0 0;
  height: 10px;
}
.side-btn {
  display: flex;
  flex: none;
  align-items: center;
  justify-content: center;
  height: 19.4px;
}
.side-sep {
  flex: none;
  height: 1px;
  margin: 3px 1px 3px;
  background: #aab4c0;
}
.doc {
  display: flex;
  flex: 1;
  flex-direction: column;
  min-width: 0;
}
.tab-strip {
  flex: none;
  height: 30px;
  background: #f5f5f5;
}
.tab {
  position: relative;
  display: flex;
  align-items: center;
  width: 158px;
  height: 29px;
  padding-left: 16px;
  box-sizing: border-box;
  background: linear-gradient(#fbe89a, #fbe38a);
  clip-path: polygon(0 100%, 11px 0, 145px 0, 158px 100%);
}
.tab-name {
  font: 700 14.7px "Open Sans", "Liberation Sans", sans-serif;
  color: #1c1c1c;
}
.tab-close {
  display: block;
  position: absolute;
  left: 134px;
  top: 4px;
  width: 21px;
  height: 22px;
  background: #c9474f;
  color: #fff;
  font: 10px/21px "Liberation Sans", sans-serif;
  text-align: center;
}
.canvas-wrap {
  position: relative;
  flex: 1;
  overflow: hidden;
}
.canvas {
  display: block;
}
.sheet-label text,
text.sheet-label {
  fill: #e6e66e;
  font: 8px "Liberation Sans", sans-serif;
  text-anchor: middle;
}
.row-label text {
  fill: #1fe62e;
  font: 700 7px "Noto Sans CJK SC", sans-serif;
  word-spacing: 3px;
  text-anchor: middle;
}
.watermark {
  position: absolute;
  right: 0;
  bottom: 0;
  box-sizing: border-box;
  width: 240px;
  height: 119px;
  padding: 22px 0 0 8px;
  background: #fff;
  color: #dedede;
  font-size: 56px;
  line-height: 70px;
  white-space: nowrap;
}
</style>
